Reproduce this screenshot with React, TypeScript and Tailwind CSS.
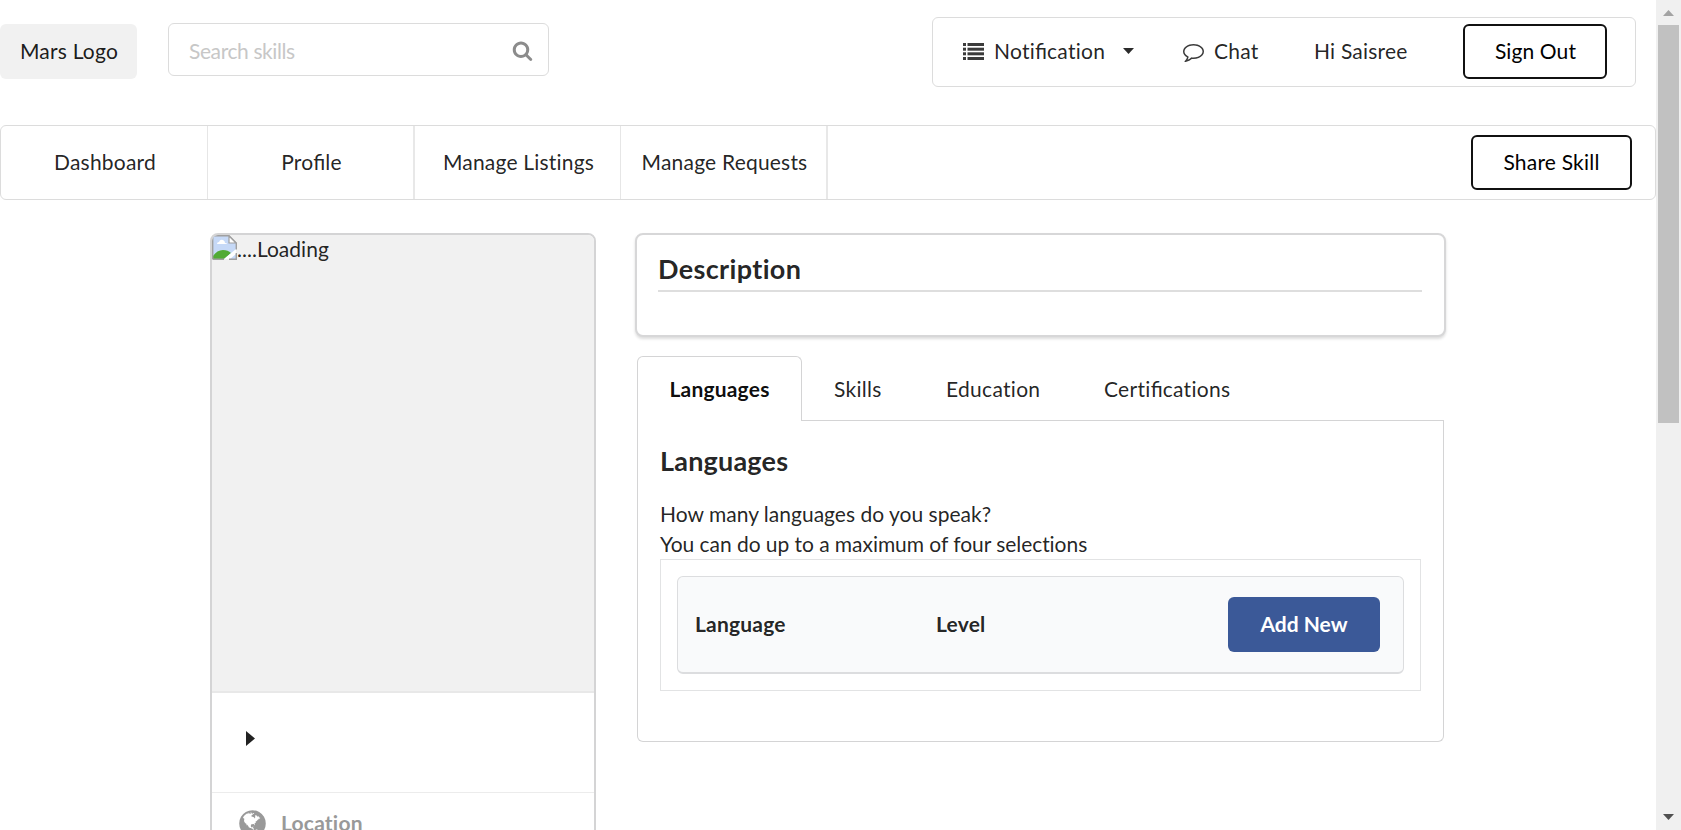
import type { ReactNode } from "react";

const COMMENT =
  "M896 384q-204 0-381.5 69.5T232.5 641 128 896q0 112 71.5 213.5T401 1285l87 50-27 96q-24 91-70 172 152-63 275-171l43-38 57 6q69 8 130 8 204 0 381.5-69.5t282-187.5 104.5-255-104.5-255-282-187.5T896 384zm896 512q0 174-120 321.5t-326 233-450 85.5q-70 0-145-8-198 175-460 242-49 14-114 22h-5q-15 0-27-10.5t-16-27.5v-1q-3-4-.5-12t2-10 4.5-9.5l6-9 7-8.5 8-9q7-8 31-34.5t34.5-38 31-39.5 32.5-51 27-59 26-76q-157-89-247.5-220T0 896q0-130 71-248.5t191-204.5 286-136.5T896 256t348 50.5T1530 443t191 204.5T1792 896z";

const SEARCH =
  "M1216 832q0-185-131.5-316.5T768 384 451.5 515.5 320 832t131.5 316.5T768 1280t316.5-131.5T1216 832zm512 832q0 52-38 90t-90 38q-54 0-90-38l-343-342q-179 124-399 124-143 0-273.5-55.5t-225-150-150-225T64 832t55.5-273.5 150-225 225-150T768 128t273.5 55.5 225 150 150 225T1472 832q0 220-124 399l343 343q37 37 37 90z";

const GLOBE =
  "M896 128q209 0 385.5 103T1561 510.5 1664 896t-103 385.5-279.5 279.5T896 1664t-385.5-103T231 1281.5 128 896t103-385.5T510.5 231 896 128zm274 521q-2 1-9.5 9.5T1147 668q2 0 4.5-5t5-11 3.5-7q6-7 22-15 14-6 52-12 34-8 51 11-2-2 9.5-13t14.5-12q3-2 15-4.5t15-7.5l2-22q-12 1-17.5-7t-6.5-21q0 2-6 8 0-7-4.5-8t-11.5 1-9 1q-10-3-15-7.5t-8-16.5-4-15q-2-5-9.5-10.5T1244 486q-1-2-2.5-5.5t-3-6.5-4-5.5-5.5-2.5-7 5-7.5 10-4.5 5q-3-2-6-1.5t-4.5 1-4.5 3-5 3.5q-3 2-8.5 3t-8.5 2q15-5-1-11-10-4-16-3 9-4 7.5-12t-8.5-14h5q-1-4-8.5-8.5T1133 439t-13-6q-8-5-34-9.5t-33-.5q-5 6-4.500 10.500t4 14 3.500 12.500q1 6-5.500 13t-6.500 12q0 7 14 15.500t10 21.500q-3 8-16 16t-16 12q-5 8-1.500 18.500T1045 575q2 2 1.500 4t-3.500 4.500-5.500 4-6.500 3.500l-3 2q-11 5-20.500-6t-13.500-26q-7-25-16-30-23-8-29 1-5-13-41-26-25-9-58-4 6-1 0-15-7-15-19-12 3-6 4-17.500t1-13.500q3-13 12-23 1-1 7-8.500t9.500-13.500.5-6q35 4 50-11 5-5 11.500-17t10.500-17q9-6 14-5.500t14.500 5.500 14.500 5q14 1 15.500-11T971 317q12 1 3-17-4-7-8-9-12-4-27 5-8 4 2 8-1-1-9.500 10.500T915 332t-16-5q-1-1-5.500-13.500T884 300q-8 0-16 15 3-8-11-15t-24-8q19-12-8-27-7-4-20.500-5t-19.500 4q-5 7-5.500 11.500t5 8 10.500 5.500 11.500 4 8.500 3q14 10 8 14-2 1-8.500 3.500T803 318t-6 4q-3 4 0 14t-2 14q-5-5-9-17.500T779 316q7 9-25 6l-10-1q-4 0-16 2t-20.500 1-13.500-8q-4-8 0-20 1-4 4-2-4-3-11-9.500t-10-8.500q-46 15-94 41 6 1 12-1 5-2 13-6.500t10-5.500q34-14 42-7l5-5q14 16 20 25-7-4-30-1-20 6-22 12 7 12 5 18-4-3-11.500-10T612 326t-15-5q-16 0-22 1-146 80-235 222 7 7 12 8 4 1 5 9t2.500 11 11.500-3q9 8 3 19 1-1 44 27 19 17 21 21 3 11-10 18-1-2-9-9t-9-4q-3 5 .5 18.500T422 672q-7 0-9.500 16t-2.500 35.500-1 23.500l2 1q-3 12 5.500 34.500T435 802q-13 3 20 43 6 8 8 9 3 2 12 7.500t15 10 10 10.500q4 5 10 22.500t14 23.500q-2 6 9.500 20t10.500 23q-1 0-2.500 1t-2.500 1q3 7 15.500 14t15.500 13q1 3 2 10t3 11 8 2q2-20-24-62-15-25-17-29-3-5-5.500-15.500T538 902q2 0 6 1.500t8.500 3.500 7.500 4 2 3q-3 7 2 17.500t12 18.500 17 19 12 13q6 6 14 19.500t0 13.500q9 0 20 10t17 20q5 8 8 26t5 24q2 7 8.500 13.500T690 1118l16 8 13 7q5 2 18.500 10.500t21.500 11.500q10 4 16 4t14.500-2.500 13.500-3.500q15-2 29 15t21 21q36 19 55 11-2 1 .5 7.500t8 15.500 9 14.500 5.500 8.500q5 6 18 15t18 15q6-4 7-9-3 8 7 20t18 10q14-3 14-32-31 15-49-18 0-1-2.500-5.500t-4-8.500-2.500-8.500 0-7.500 5-3q9 0 10-3.500t-2-12.500-4-13q-1-8-11-20t-12-15q-5 9-16 8t-16-9q0 1-1.500 5.500T938 1164q-13 0-15-1 1-3 2.500-17.500T929 1123q1-4 5.500-12t7.500-14.500 4-12.500-4.500-9.500T924 1072q-19 1-26 20-1 3-3 10.500t-5 11.500-9 7q-7 3-24 2t-24-5q-13-8-22.500-29t-9.500-37q0-10 2.500-26.500T806 1000t-5.500-24.500q3-2 9-9.500t10-10.500q2-1 4.500-1.500t4.500 0 4-1.500 3-6q-1-1-4-3-3-3-4-3 7 3 28.500-1.500T883 937q15 11 22-2 0-1-2.500-9.500T901 912q5 27 29 9 3 3 15.500 5t17.500 5q3 2 7 5.500t5.500 4.500 5-.5 8.500-6.500q10 14 12 24 11 40 19 44 7 3 11 2t4.500-9.500 0-14T1034 964l-1-8v-18l-1-8q-15-3-18.500-12t1.500-18.500 15-18.500q1-1 8-3.500t15.500-6.500 12.500-8q21-19 15-35 7 0 11-9-1 0-5-3t-7.500-5-4.500-2q9-5 2-16 5-3 7.500-11t7.500-10q9 12 21 2 8-8 1-16 5-7 20.500-10.500T1153 737q7 2 8-2t1-12 3-12q4-5 15-9t13-5l17-11q3-4 0-4 18 2 31-11 10-11-6-20 3-6-3-9.500t-15-5.500q3-1 11.500-.5t10.500-1.500q15-10-7-16-17-5-43 12zm-163 877q206-36 351-189-3-3-12.500-4.500T1333 1328q-18-7-24-8 1-7-2.500-13t-8-9-12.500-8-11-7q-2-2-7-6t-7-5.500-7.500-4.500-8.500-2-10 1l-3 1q-3 1-5.500 2.500t-5.500 3-4 3 0 2.500q-21-17-36-22-5-1-11-5.500t-10.500-7-10-1.500-11.500 7q-5 5-6 15t-2 13q-7-5 0-17.500t2-18.500q-3-6-10.500-4.500t-12 4.500-11.500 8.500-9 6.500-8.500 5.500-8.500 7.500q-3 4-6 12t-5 11q-2-4-11.500-6.500T1000 1278q2 10 4 35t5 38q7 31-12 48-27 25-29 40-4 22 12 26 0 7-8 20.500t-7 21.500q0 6 2 16z";

function Glyph({ d, className }: { d: string; className: string }) {
  return (
    <svg viewBox="0 0 1792 1792" fill="currentColor" className={className}>
      <path d={d} />
    </svg>
  );
}

function ListIcon() {
  return (
    <svg viewBox="0 0 21 17" className="h-[17px] w-[21px] shrink-0" fill="#3b3b3b">
      {[0, 4.7, 9.3, 14].map((y) => (
        <g key={y}>
          <rect x="0" y={y} width="3" height="3" />
          <rect x="4.5" y={y} width="16.5" height="3" />
        </g>
      ))}
    </svg>
  );
}

function BrokenImage() {
  return (
    <svg viewBox="0 0 25 25" className="h-[25px] w-[25px] shrink-0">
      <path d="M1 1h16l7 7v16H1z" fill="#c6d9f7" />
      <path d="M5 9q0-2 2-2 1-3 4-2 2 1 2 3 2 0 2 1z" fill="#fff" />
      <path d="M1 24v-3q4-6 10-6 5 0 8 3l-7 6z" fill="#52ab36" />
      <path d="M24 14 12 24h6l6-5z" fill="#fff" />
      <path d="M.7 24.2V.7H17l7.300 7.300v6.500M.7 24.2H12M17 24.2h7.300V18" fill="none" stroke="#a0a0a0" strokeWidth="1.4" />
      <path d="M17 1v7h7z" fill="#fff" stroke="#a0a0a0" strokeWidth="1.2" />
    </svg>
  );
}

function OutlineButton({ children, className }: { children: ReactNode; className: string }) {
  return (
    <button
      className={`flex h-[55px] items-center justify-center rounded-md border-2 border-[#111] bg-white text-black ${className}`}
    >
      {children}
    </button>
  );
}

function TopBar() {
  return (
    <header className="flex h-[125px] shrink-0 items-start">
      <div className="mt-[24px] flex h-[55px] w-[137px] items-center justify-center rounded-md bg-[#f1f1f1] pb-[2px] pl-px text-black/90">
        Mars Logo
      </div>
      <div className="mt-[23px] ml-[31px] flex h-[53px] w-[381px] items-center justify-between rounded-md border border-[#dcdcdc] pt-px pr-[15px] pl-[20px]">
        <span className="pt-px tracking-[-0.4px] text-[#c7c7c7]">Search skills</span>
        <Glyph d={SEARCH} className="h-[21px] w-[21px] text-[#8c8c8c]" />
      </div>
      <div className="mt-[17px] mr-[20px] ml-auto flex h-[70px] w-[704px] items-center rounded-md border border-[#dcdcdc] pb-[2px] pl-[30px]">
        <ListIcon />
        <span className="ml-[10px] w-[112px] tracking-[0.26px]">
          Noti<span className="tracking-normal">fi</span>cation
        </span>
        <svg viewBox="0 0 11 6" className="ml-[17px] h-[6px] w-[11px]" fill="#2b2b2b">
          <path d="M0 0h11L5.500 6z" />
        </svg>
        <Glyph d={COMMENT} className="ml-[49px] h-[21px] w-[21px] text-[#3b3b3b]" />
        <span className="ml-[10px] w-[46px]">Chat</span>
        <span className="ml-[54px]">Hi Saisree</span>
        <OutlineButton className="mr-[28px] ml-auto w-[144px] pl-px tracking-[0.1px]">Sign Out</OutlineButton>
      </div>
    </header>
  );
}

const NAV: ReactNode[] = [
  "Dashboard",
  <span>
    Pro<span className="tracking-normal">fi</span>le
  </span>,
  "Manage Listings",
  "Manage Requests",
];

function NavBar() {
  return (
    <nav className="flex h-[75px] shrink-0 items-center rounded-md border border-[#dcdcdc]">
      {NAV.map((label, i) => (
        <a
          key={i}
          className={`flex h-full items-center justify-center pb-[2px] pl-[2px] whitespace-nowrap ${
            i === 0
              ? "w-[207px] border-r border-[#e6e6e6]"
              : i === 2
                ? "w-[206px] border-r border-[#e6e6e6]"
                : "w-[207px] border-r-2 border-[#e8e8e8]"
          }`}
        >
          {label}
        </a>
      ))}
      <OutlineButton className="mr-[23px] ml-auto w-[161px] pb-[2px]">Share Skill</OutlineButton>
    </nav>
  );
}

function ProfileCard() {
  return (
    <aside className="h-[640px] w-[386px] shrink-0 overflow-hidden rounded-t-lg border-2 border-[#d4d4d5] bg-white">
      <div className="flex h-[456px] items-start bg-[#f1f1f1]">
        <BrokenImage />
        <span className="leading-[28px] tracking-[0.02px]">....Loading</span>
      </div>
      <div className="flex h-[101px] items-center border-t-2 border-[#e8e8e8] pl-[34px]">
        <svg viewBox="0 0 9 15" className="mt-[-8px] h-[15px] w-[9px]" fill="#222">
          <path d="M0 0v15l9-7.500z" />
        </svg>
      </div>
      <div className="flex items-center border-t border-[#ececec] pt-[15px] pl-[25px] font-bold text-[#999]">
        <Glyph d={GLOBE} className="h-[31px] w-[31px]" />
        <span className="-mt-[2px] ml-[13px]">Location</span>
      </div>
    </aside>
  );
}

function DescriptionCard() {
  return (
    <section className="h-[104px] w-[811px] rounded-lg border-2 border-[#d7d7d8] bg-white pr-[22px] pl-[21px] shadow-[0_2px_3px_0_#dddddd]">
      <h3 className="h-[57px] border-b-2 border-[#dedede] pt-[17px] text-[27px] leading-[34px] font-bold tracking-[0.36px]">
        Description
      </h3>
    </section>
  );
}

function Tabs() {
  return (
    <div className="ml-[2px] flex h-[65px] w-[807px]">
      <div className="flex w-[165px] items-center justify-center rounded-t-md border border-b-0 border-[#d4d4d5] font-bold text-black/95">
        Languages
      </div>
      <div className="flex flex-1 items-center border-b border-[#d4d4d5] pt-[2px] pl-[32px] tracking-[0.3px]">
        <span className="w-[112px]">Skills</span>
        <span className="w-[158px]">Education</span>
        <span>
          Certi<span className="tracking-normal">fi</span>cations
        </span>
      </div>
    </div>
  );
}

function LanguagesPanel() {
  return (
    <section className="ml-[2px] h-[321px] w-[807px] rounded-b-md border border-t-0 border-[#d4d4d5] px-[22px]">
      <h3 className="pt-[23px] text-[27px] leading-[34px] font-bold">Languages</h3>
      <p className="mt-[21px] leading-[30px] tracking-[-0.05px]">
        <span className="tracking-[0.01px]">How many languages do you speak?</span>
        <br />
        You can do up to a maximum of four selections
      </p>
      <div className="h-[132px] w-[761px] border border-[#e2e3e4] p-[16px]">
        <div className="flex h-[98px] w-[727px] items-center rounded-md border border-b-2 border-[#dcdddf] bg-[#f9fafb] pl-[17px] font-bold">
          <span className="w-[241px] pb-[2px]">Language</span>
          <span className="pb-[2px]">Level</span>
          <button className="mr-[23px] ml-auto flex h-[55px] w-[152px] items-center justify-center rounded-md bg-[#3b5998] pb-[2px] tracking-normal text-white">
            Add New
          </button>
        </div>
      </div>
    </section>
  );
}

function Scrollbar() {
  return (
    <div className="flex h-full w-[25px] shrink-0 flex-col items-center bg-[#f0f0f0]">
      <svg viewBox="0 0 11 6" className="mt-[10px] h-[6px] w-[11px]" fill="#a3a3a3">
        <path d="M0 6h11L5.500 0z" />
      </svg>
      <div className="mt-[9px] h-[398px] w-[21px] bg-[#c1c1c1]" />
      <svg viewBox="0 0 11 6" className="mt-auto mb-[10px] h-[6px] w-[11px]" fill="#505050">
        <path d="M0 0h11L5.500 6z" />
      </svg>
    </div>
  );
}

export default function App() {
  return (
    <div className="flex h-[830px] w-[1681px] overflow-hidden bg-white font-['Lato',sans-serif] text-[21px] leading-[30px] tracking-[0.2px] text-black/87">
      <div className="flex min-w-0 flex-1 flex-col">
        <TopBar />
        <NavBar />
        <main className="flex shrink-0 gap-[39px] pt-[33px] pl-[210px]">
          <ProfileCard />
          <div className="flex flex-col">
            <DescriptionCard />
            <div className="h-[19px]" />
            <Tabs />
            <LanguagesPanel />
          </div>
        </main>
      </div>
      <Scrollbar />
    </div>
  );
}
